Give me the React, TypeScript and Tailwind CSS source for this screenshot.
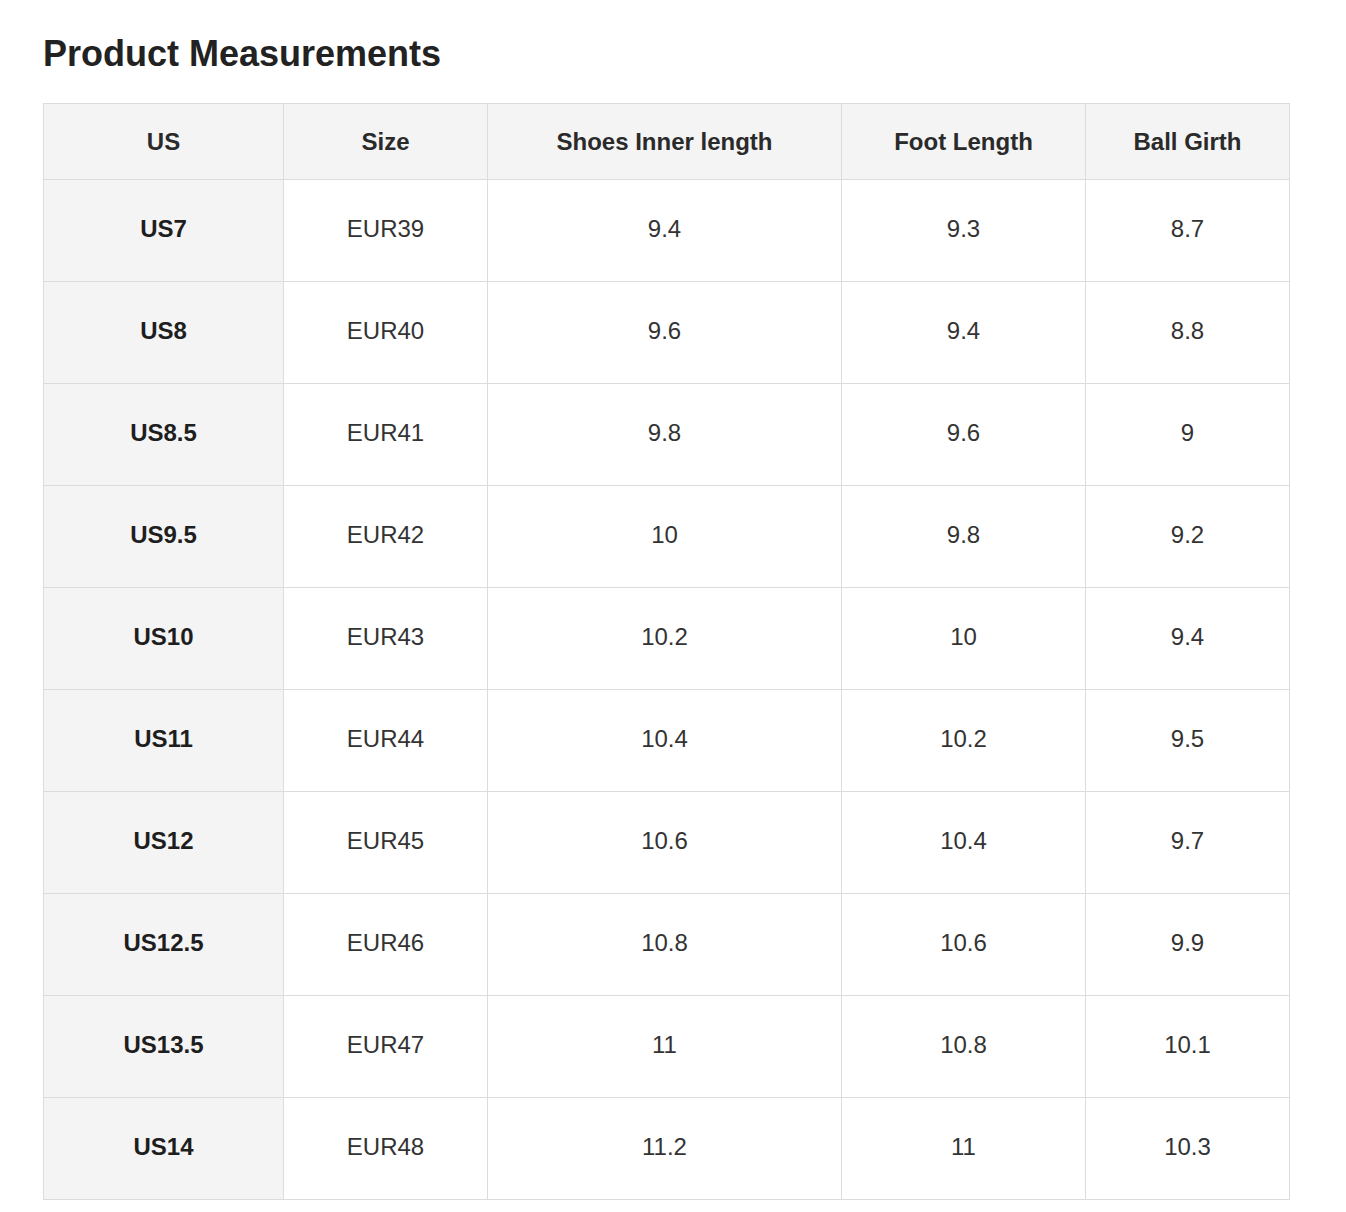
const rows = [
	["US7", "EUR39", "9.4", "9.3", "8.7"],
	["US8", "EUR40", "9.6", "9.4", "8.8"],
	["US8.5", "EUR41", "9.8", "9.6", "9"],
	["US9.5", "EUR42", "10", "9.8", "9.2"],
	["US10", "EUR43", "10.2", "10", "9.4"],
	["US11", "EUR44", "10.4", "10.2", "9.5"],
	["US12", "EUR45", "10.6", "10.4", "9.7"],
	["US12.5", "EUR46", "10.8", "10.6", "9.9"],
	["US13.5", "EUR47", "11", "10.8", "10.1"],
	["US14", "EUR48", "11.2", "11", "10.3"],
];

const headers = ["US", "Size", "Shoes Inner length", "Foot Length", "Ball Girth"];
const widths = [240, 204, 354, 244, 204];

export default function App() {
	return (
		<div className="min-h-[1212px] bg-white pl-[43px] pt-[36px] font-['Liberation_Sans',Arial,sans-serif]">
			<h1 className="text-[36px] font-bold leading-none text-[#222]">
				Product Measurements
			</h1>

			<table className="mt-[31px] w-[1247px] table-fixed border-collapse border border-[#dcdcdc]">
				<colgroup>
					{widths.map((w, i) => (
						<col key={i} style={{ width: w }} />
					))}
				</colgroup>
				<thead>
					<tr className="h-[76px] bg-[#f4f4f4]">
						{headers.map((h) => (
							<th
								key={h}
								className="border border-[#dcdcdc] text-center text-[24px] font-semibold text-[#2a2a2a]"
							>
								{h}
							</th>
						))}
					</tr>
				</thead>
				<tbody>
					{rows.map((r) => (
						<tr key={r[0]} className="h-[102px]">
							<td className="border border-[#dcdcdc] bg-[#f4f4f4] pb-[3px] text-center text-[24px] font-bold text-[#1e1e1e]">
								{r[0]}
							</td>
							{r.slice(1).map((v, i) => (
								<td
									key={i}
									className="border border-[#dcdcdc] pb-[3px] text-center text-[24px] text-[#333]"
								>
									{v}
								</td>
							))}
						</tr>
					))}
				</tbody>
			</table>
		</div>
	);
}
